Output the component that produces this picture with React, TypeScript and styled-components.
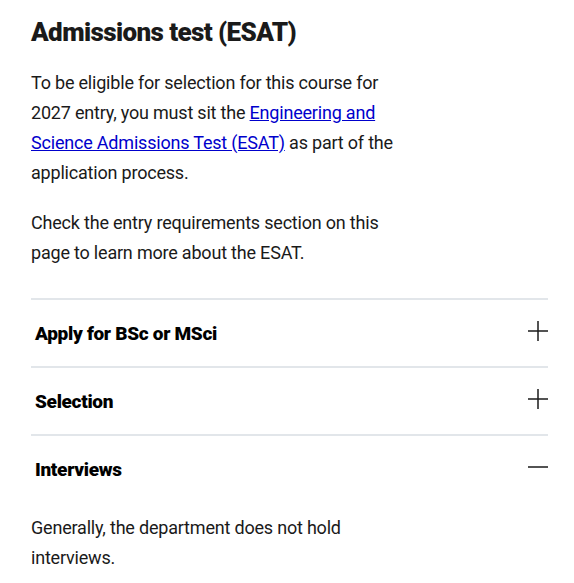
import { FC, useState } from 'react';
import styled, { createGlobalStyle } from 'styled-components';

const GlobalStyle = createGlobalStyle`
  body {
    margin: 0;
    background: #ffffff;
    font-family: Roboto, "Liberation Sans", sans-serif;
    color: #1a1a1a;
  }
`;

interface SectionItem {
  title: string;
  body?: string;
}

const sections: SectionItem[] = [
  { title: 'Apply for BSc or MSci' },
  { title: 'Selection' },
  { title: 'Interviews', body: 'Generally, the department does not hold interviews.' },
];

const Icon: FC<{ open: boolean }> = ({ open }) => (
  <IconSvg width="20" height="20" viewBox="0 0 20 20" fill="none">
    <path d="M0 10H20" stroke="#1a1a1a" strokeWidth="1.5" />
    {!open && <path d="M10 0V20" stroke="#1a1a1a" strokeWidth="1.5" />}
  </IconSvg>
);

const App: FC = () => {
  const [openIndex, setOpenIndex] = useState<number>(2);

  return (
    <>
      <GlobalStyle />
      <Page>
        <Heading>Admissions test (ESAT)</Heading>
        <Text>
          To be eligible for selection for this course for 2027 entry, you must sit the{' '}
          <Link href="#">Engineering and Science Admissions Test (ESAT)</Link> as part of the
          application process.
        </Text>
        <Text>Check the entry requirements section on this page to learn more about the ESAT.</Text>
        <Accordion>
          {sections.map((item, i) => (
            <Item key={item.title}>
              <ItemHeader onClick={() => setOpenIndex(openIndex === i ? -1 : i)}>
                <ItemTitle>{item.title}</ItemTitle>
                <Icon open={openIndex === i} />
              </ItemHeader>
              {openIndex === i && item.body && <Panel>{item.body}</Panel>}
            </Item>
          ))}
        </Accordion>
      </Page>
    </>
  );
};
export default App;

const Page = styled.div`
  padding: 16px 26px 0 31px;
`;
const Heading = styled.h2`
  margin: 0 0 20px;
  font-size: 26px;
  line-height: 32px;
  font-weight: 900;
  letter-spacing: -0.6px;
  color: #1a1a1a;
`;
const Text = styled.p`
  margin: 0 0 20px;
  max-width: 372px;
  font-size: 18px;
  line-height: 30px;
  letter-spacing: -0.2px;
`;
const Link = styled.a`
  color: #0000cc;
  text-decoration: underline;
`;
const Accordion = styled.div`
  margin-top: 30px;
`;
const Item = styled.div`
  border-top: 2px solid #e2e6ea;
`;
const ItemHeader = styled.div`
  display: flex;
  align-items: center;
  justify-content: space-between;
  height: 66px;
  padding-left: 4px;
  cursor: pointer;
`;
const ItemTitle = styled.span`
  font-size: 19px;
  font-weight: 900;
  letter-spacing: -0.3px;
  color: #000000;
  margin-top: 1px;
`;
const IconSvg = styled.svg`
  flex-shrink: 0;
  margin-bottom: 5px;
`;
const Panel = styled.p`
  margin: 0;
  padding-top: 11px;
  max-width: 372px;
  font-size: 18px;
  line-height: 30px;
  letter-spacing: -0.2px;
`;
